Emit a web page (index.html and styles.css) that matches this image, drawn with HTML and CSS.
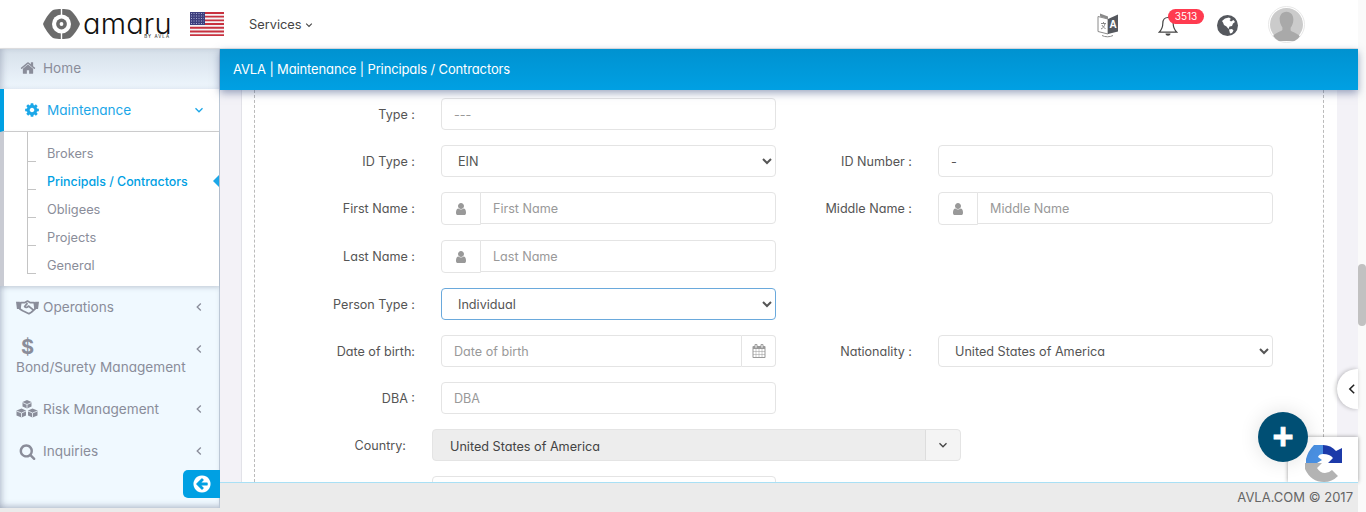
FILE: index.html
```html
<!DOCTYPE html>
<html lang="en">
<head>
    <meta charset="UTF-8">
    <meta name="viewport" content="width=device-width, initial-scale=1.0">
    <title>Principals / Contractors - Amaru</title>
    <link rel="stylesheet" href="styles.css">
</head>
<body>
    <svg class="sprite" aria-hidden="true">
        <symbol id="i-user" viewBox="0 0 1792 1792"><path d="M1536 1399q0 109-62.5 187t-150.5 78h-854q-88 0-150.5-78t-62.5-187q0-85 8.5-160.5t31.5-152 58.5-131 94-89 134.5-34.5q131 128 313 128t313-128q76 0 134.5 34.5t94 89 58.5 131 31.5 152 8.5 160.5zm-256-887q0 159-112.5 271.5t-271.5 112.5-271.5-112.5-112.5-271.5 112.5-271.5 271.5-112.5 271.5 112.5 112.5 271.5z"/></symbol>
        <symbol id="i-left" viewBox="0 0 10 10"><polyline points="6.8,1.5 3.2,5 6.8,8.5" fill="none" stroke="currentColor" stroke-width="1.3"/></symbol>
        <symbol id="i-down" viewBox="0 0 10 10"><polyline points="1.5,3.2 5,6.8 8.5,3.2" fill="none" stroke="currentColor" stroke-width="1.3"/></symbol>
    </svg>

    <div class="page">
        <div class="window">
            <header class="topbar">
                <a class="logo" href="#">
                    <svg class="logo-mark" viewBox="0 0 37 30">
                        <path fill="#6b6b6b" d="M10 1C15-.3 22-.3 27 1C31 4 35 10 37 15C35 20 31 26 27 29C22 30.300 15 30.300 10 29C6 26 2 20 0 15C2 10 6 4 10 1Z"/>
                        <circle cx="18.500" cy="15" r="9.500" fill="#fff"/>
                        <circle cx="18.500" cy="15" r="5.400" fill="#6b6b6b"/>
                        <circle cx="18.500" cy="15" r="1.900" fill="#fff"/>
                        <rect x="17.800" y="0" width="1.400" height="6" fill="#fff"/>
                        <rect x="17.800" y="24" width="1.400" height="6" fill="#fff"/>
                    </svg>
                    <span class="logo-text">amaru<small>BY AVLA</small></span>
                </a>
                <svg class="flag" viewBox="0 0 34 24">
                    <rect width="34" height="24" rx="1.5" fill="#f4f4f6"/>
                    <path fill="#c8313f" d="M0 0h34v2H0zM0 3.7h34v1.9H0zM0 7.4h34v1.9H0zM0 11.1h34v1.9H0zM0 14.8h34v1.9H0zM0 18.5h34v1.9H0zM0 22.2h34V24H0z"/>
                    <rect width="15" height="13" fill="#3d3f7e"/>
                    <path stroke="#a9abd0" stroke-width="1" stroke-dasharray="1 1.5" d="M1 1.5h13M1 4h13M1 6.5h13M1 9h13M1 11.5h13"/>
                </svg>
                <a class="services" href="#">Services <svg class="chev"><use href="#i-down"/></svg></a>

                <div class="topbar-tools">
                    <svg class="tool-lang" viewBox="0 0 22 26">
                        <path fill="#fff" stroke="#8a8a8a" d="M1 4.5 11 7V22L1 19.5Z"/>
                        <path fill="#55585e" d="M11 7 21 2.5V19.5L11 22Z"/>
                        <path fill="#8a8a8a" d="M3 1.5 11 4.5V7L3 4.5Z"/>
                        <path fill="none" stroke="#8a8a8a" d="M4 11.5h5M6.5 10v1.5M8 11.5c-.5 3-2 4.5-4 5.5M5 13c.7 1.5 2 3 3.5 3.5"/>
                        <text class="lang-letter" x="16" y="16">A</text>
                        <path fill="none" stroke="#8a8a8a" d="M5 23.5c3 1.7 8 1.7 11 0"/>
                    </svg>
                    <div class="bell">
                        <svg class="bell-icon" viewBox="0 0 20 21">
                            <path fill="#fff" stroke="#444" stroke-width="1.2" d="M10 1.5c-3.5 0-5.2 2.8-5.2 6 0 4.5-1.5 6.5-3.6 8.6h17.6c-2.1-2.1-3.6-4.1-3.6-8.6 0-3.2-1.7-6-5.2-6Z"/>
                            <path fill="#444" d="M7.5 17.5h5c0 3-5 3-5 0Z"/>
                        </svg>
                        <span class="badge">3513</span>
                    </div>
                    <svg class="globe" viewBox="0 0 21 21">
                        <circle cx="10.5" cy="10.5" r="10.5" fill="#55585e"/>
                        <path fill="#fff" d="M5 6 8 3.5 12 2.5 14 4 12.5 5 14 6.5 16.5 5 18 7 16 8.5 15 11 12.5 11.5 11.5 14 9.5 11.5 7 10 6 7.5ZM12 14.5 15 14 16.5 15.5 15 18 13 18.5Z"/>
                    </svg>
                    <div class="avatar">
                        <svg viewBox="0 0 36 36">
                            <circle cx="18" cy="18" r="18" fill="#cbcbcb"/>
                            <path fill="#a9a9a9" d="M18 4c5 0 7.5 4 7.5 8.5 0 3.5-1.5 7-3 9v3c2 2 8 3 10 6.5A18 18 0 0 1 3.500 30.500c2-3.500 8-4.500 10-6.500v-3c-1.500-2-3-5.500-3-9C10.500 8 13 4 18 4Z"/>
                        </svg>
                    </div>
                </div>
            </header>

            <div class="body-row">
                <aside class="sidebar">
                    <ul class="menu">
                        <li class="menu-item home">
                            <svg class="menu-icon" viewBox="0 0 1792 1792"><path d="M1472 992v480q0 26-19 45t-45 19h-384v-384h-256v384h-384q-26 0-45-19t-19-45v-480q0-1 .5-3t.5-3l575-474 575 474q1 2 1 6zm223-69l-62 74q-8 9-21 11h-3q-13 0-21-7l-692-577-692 577q-12 8-24 7-13-2-21-11l-62-74q-8-10-7-23.5t11-21.5l719-599q32-26 76-26t76 26l244 204v-195q0-14 9-23t23-9h192q14 0 23 9t9 23v408l219 182q10 8 11 21.5t-7 23.5z"/></svg>
                            <span>Home</span>
                        </li>
                        <li class="menu-item active">
                            <svg class="menu-icon" viewBox="0 0 1792 1792"><path d="M1152 896q0-106-75-181t-181-75-181 75-75 181 75 181 181 75 181-75 75-181zm512-109v222q0 12-8 23t-20 13l-185 28q-19 54-39 91 35 50 107 138 10 12 10 25t-9 23q-27 37-99 108t-94 71q-12 0-26-9l-138-108q-44 23-91 38-16 136-29 186-7 28-36 28h-222q-14 0-24.5-8.500t-11.500-21.500l-28-184q-49-16-90-37l-141 107q-10 9-25 9-14 0-25-11-126-114-165-168-7-10-7-23 0-12 8-23 15-21 51-66.500t54-70.500q-27-50-41-99l-183-27q-13-2-21-12.500t-8-23.500v-222q0-12 8-23t19-13l186-28q14-46 39-92-40-57-107-138-10-12-10-24 0-10 9-23 26-36 98.500-107.500t94.500-71.500q13 0 26 10l138 107q44-23 91-38 16-136 29-186 7-28 36-28h222q14 0 24.500 8.500t11.500 21.500l28 184q49 16 90 37l142-107q9-9 24-9 13 0 25 10 129 119 165 170 7 8 7 22 0 12-8 23-15 21-51 66.500t-54 70.500q26 50 41 98l183 28q13 2 21 12.500t8 23.500z"/></svg>
                            <span>Maintenance</span>
                            <svg class="chev menu-chev"><use href="#i-down"/></svg>
                        </li>
                        <li class="submenu">
                            <ul>
                                <li>Brokers</li>
                                <li class="current">Principals / Contractors</li>
                                <li>Obligees</li>
                                <li>Projects</li>
                                <li>General</li>
                            </ul>
                        </li>
                        <li class="menu-item">
                            <svg class="menu-icon wide" viewBox="0 0 24 16">
                                <path fill="none" stroke="currentColor" stroke-width="1.800" stroke-linejoin="round" d="M5 3.500 9 3.500 12 1.800 15 3.500 19 3.500 20 10 16 13.500 13.500 15 7 12 4 10ZM12 4 9 7.500C10 9 12 8.500 13 7L18 11"/>
                                <path fill="currentColor" d="M0 2.500h4L5 10H1ZM20 2.500h4L23 10h-4Z"/>
                            </svg>
                            <span>Operations</span>
                            <svg class="chev menu-chev"><use href="#i-left"/></svg>
                        </li>
                        <li class="menu-item stacked">
                            <span class="dollar">$</span>
                            <span>Bond/Surety Management</span>
                            <svg class="chev menu-chev"><use href="#i-left"/></svg>
                        </li>
                        <li class="menu-item">
                            <svg class="menu-icon wide cubes" viewBox="0 0 22 18">
                                <path d="M11 0 15.500 2V6.500L11 8.500 6.500 6.500V2ZM5.500 8.500 10 10.500V15.500L5.500 17.500 0.500 15.500V10.500ZM16.500 8.500 21.500 10.500V15.500L16.500 17.500 12 15.500V10.500Z"/>
                                <path fill="none" stroke="#f0f9ff" stroke-width=".8" d="M6.500 2.500 11 4.500 15.500 2.500M11 4.500V8.500M.5 11 5.500 13 10 11M5.500 13V17.500M12 11 16.500 13 21.500 11M16.500 13V17.500"/>
                            </svg>
                            <span>Risk Management</span>
                            <svg class="chev menu-chev"><use href="#i-left"/></svg>
                        </li>
                        <li class="menu-item">
                            <svg class="menu-icon search" viewBox="0 0 1792 1792"><path d="M1216 832q0-185-131.500-316.500t-316.500-131.500-316.500 131.500-131.500 316.500 131.500 316.500 316.500 131.500 316.500-131.500 131.500-316.500zm512 832q0 52-38 90t-90 38q-54 0-90-38l-343-342q-179 124-399 124-143 0-273.500-55.500t-225-150-150-225-55.500-273.500 55.500-273.500 150-225 225-150 273.500-55.500 273.500 55.500 225 150 150 225 55.500 273.500q0 220-124 399l343 343q37 37 37 90z"/></svg>
                            <span>Inquiries</span>
                            <svg class="chev menu-chev"><use href="#i-left"/></svg>
                        </li>
                    </ul>
                    <button class="collapse-btn" type="button">
                        <svg viewBox="0 0 1792 1792"><path d="M1408 960v-128q0-26-19-45t-45-19h-502l189-189q19-19 19-45t-19-45l-91-91q-18-18-45-18t-45 18l-362 362-91 91q-18 18-18 45t18 45l91 91 362 362q18 18 45 18t45-18l91-91q18-18 18-45t-18-45l-189-189h502q26 0 45-19t19-45zm256-64q0 209-103 385.500t-279.500 279.500-385.500 103-385.500-103-279.500-279.500-103-385.500 103-385.500 279.500-279.500 385.500-103 385.500 103 279.500 279.500 103 385.500z"/></svg>
                    </button>
                </aside>

                <main class="main">
                    <div class="breadcrumb">AVLA | Maintenance | Principals / Contractors</div>
                    <div class="content">
                        <div class="card">
                            <div class="dashed">
                                <form class="form-grid">
                                    <label>Type :</label>
                                    <input class="field" type="text" placeholder="---">
                                    <span></span><span></span>

                                    <label>ID Type :</label>
                                    <select class="field"><option>EIN</option></select>
                                    <label>ID Number :</label>
                                    <input class="field" type="text" value="-">

                                    <label>First Name :</label>
                                    <div class="group">
                                        <span class="addon"><svg><use href="#i-user"/></svg></span>
                                        <input class="field" type="text" placeholder="First Name">
                                    </div>
                                    <label>Middle Name :</label>
                                    <div class="group">
                                        <span class="addon"><svg><use href="#i-user"/></svg></span>
                                        <input class="field" type="text" placeholder="Middle Name">
                                    </div>

                                    <label>Last Name :</label>
                                    <div class="group">
                                        <span class="addon"><svg><use href="#i-user"/></svg></span>
                                        <input class="field" type="text" placeholder="Last Name">
                                    </div>
                                    <span></span><span></span>

                                    <label>Person Type :</label>
                                    <select class="field focused"><option>Individual</option></select>
                                    <span></span><span></span>

                                    <label>Date of birth:</label>
                                    <div class="group date">
                                        <input class="field" type="text" placeholder="Date of birth">
                                        <span class="addon">
                                            <svg viewBox="0 0 1792 1792"><path d="M192 1664h288v-288h-288v288zm352 0h320v-288h-320v288zm-352-352h288v-320h-288v320zm352 0h320v-320h-320v320zm-352-384h288v-288h-288v288zm736 736h320v-288h-320v288zm-384-736h320v-288h-320v288zm768 736h288v-288h-288v288zm-384-352h320v-320h-320v320zm-352-864v-288q0-13-9.500-22.500t-22.500-9.500h-64q-13 0-22.500 9.500t-9.500 22.500v288q0 13 9.500 22.500t22.500 9.500h64q13 0 22.500-9.500t9.500-22.500zm736 864h288v-320h-288v320zm-384-384h320v-288h-320v288zm384 0h288v-288h-288v288zm32-480v-288q0-13-9.500-22.500t-22.500-9.500h-64q-13 0-22.500 9.500t-9.500 22.500v288q0 13 9.500 22.500t22.500 9.500h64q13 0 22.500-9.500t9.500-22.500zm384-64v1280q0 52-38 90t-90 38h-1408q-52 0-90-38t-38-90v-1280q0-52 38-90t90-38h128v-96q0-66 47-113t113-47h64q66 0 113 47t47 113v96h384v-96q0-66 47-113t113-47h64q66 0 113 47t47 113v96h128q52 0 90 38t38 90z"/></svg>
                                        </span>
                                    </div>
                                    <label>Nationality :</label>
                                    <select class="field"><option>United States of America</option></select>

                                    <label>DBA :</label>
                                    <input class="field" type="text" placeholder="DBA">
                                    <span></span><span></span>
                                </form>

                                <div class="form-grid address">
                                    <label>Country:</label>
                                    <div class="combo">
                                        <span class="combo-value">United States of America</span>
                                        <span class="combo-arrow"><svg class="chev"><use href="#i-down"/></svg></span>
                                    </div>
                                    <span></span>
                                    <input class="field" type="text">
                                </div>
                            </div>
                        </div>

                        <button class="side-toggle" type="button"><svg><use href="#i-left"/></svg></button>
                        <button class="fab" type="button">+</button>
                        <div class="recaptcha">
                            <svg viewBox="0 0 38 38">
                                <path fill="#b3b3b3" d="M0 18H17L12 23Q15 28 20 28 24 28 27 25L33 31Q27 37 19 37 6 37 0 24Z"/>
                                <path fill="#4a90e2" d="M1 18V14Q3 6 9 0H18V9Q14 9 13 12L17 15 12 18Z"/>
                                <path fill="#1c3aa9" d="M18 0Q26 0 31 6L37 3V18H23L28 13Q25 9 18 9Z"/>
                            </svg>
                        </div>
                    </div>
                    <footer class="footer">AVLA.COM © 2017</footer>
                </main>
            </div>
        </div>
        <div class="scrollbar"><div class="thumb"></div></div>
    </div>
</body>
</html>
```

FILE: styles.css
```css
* {
    box-sizing: border-box;
}
html, body {
    height: 100%;
}
body {
    margin: 0;
    font-family: Inter, Lato, sans-serif;
    font-feature-settings: "cv11";
    font-size: 13px;
    color: #555;
    background-color: #ebebeb;
    overflow: hidden;
}
.sprite {
    display: none;
}
.chev {
    width: 10px;
    height: 10px;
}
.page {
    display: flex;
    height: 100%;
}
.window {
    flex: 1;
    display: flex;
    flex-direction: column;
    min-width: 0;
}
.scrollbar {
    width: 8px;
    background: #fafafa;
}
.thumb {
    width: 8px;
    height: 62px;
    margin-top: 264px;
    border-radius: 4px;
    background: #c1c1c1;
}

/* top bar */
.topbar {
    height: 49px;
    display: flex;
    align-items: center;
    background: #fff;
    border-bottom: 1px solid #e4e4e4;
    flex-shrink: 0;
}
.logo {
    display: flex;
    align-items: flex-start;
    gap: 3px;
    margin-left: 43px;
    color: #111;
    text-decoration: none;
}
.logo-mark {
    width: 37px;
    height: 30px;
}
.logo-text {
    position: relative;
    width: 87px;
    margin-top: 4px;
    font-weight: 300;
    font-size: 29px;
    line-height: 22px;
    letter-spacing: .2px;
}
.logo-text small {
    position: absolute;
    right: 0;
    top: 22px;
    font-size: 4.500px;
    line-height: 4px;
    letter-spacing: 1px;
    font-weight: 400;
    white-space: nowrap;
}
.flag {
    width: 34px;
    height: 24px;
    margin-left: 20px;
}
.services {
    margin-left: 25px;
    margin-top: 1px;
    color: #444;
    font-size: 12.800px;
    text-decoration: none;
    display: flex;
    align-items: center;
    gap: 3px;
}
.services .chev {
    width: 8px;
}
.topbar-tools {
    margin-left: auto;
    display: flex;
    align-items: center;
    padding-right: 53px;
}
.tool-lang {
    width: 22px;
    height: 26px;
    margin-top: 2px;
}
.lang-letter {
    font: 700 10px "Liberation Sans", sans-serif;
    fill: #fff;
    text-anchor: middle;
}
.bell {
    position: relative;
    width: 20px;
    height: 21px;
    margin-left: 39px;
    margin-top: 4px;
}
.bell-icon {
    width: 20px;
    height: 21px;
    display: block;
}
.badge {
    position: absolute;
    left: 10px;
    top: -7px;
    width: 36px;
    height: 15px;
    border-radius: 8px;
    background: #ff3b50;
    color: #fff;
    font-size: 10px;
    line-height: 15px;
    text-align: center;
}
.globe {
    width: 21px;
    height: 21px;
    margin-left: 39px;
    margin-top: 2px;
}
.avatar {
    width: 37px;
    height: 37px;
    margin-left: 30px;
    padding: 1px;
    border-radius: 50%;
    border: 1px solid #e8e8e8;
}
.avatar svg {
    display: block;
    width: 100%;
    height: 100%;
}

/* sidebar */
.body-row {
    flex: 1;
    display: flex;
    min-height: 0;
}
.sidebar {
    position: relative;
    width: 220px;
    height: 459px;
    flex-shrink: 0;
    background: #f0f9ff;
    box-shadow: inset 4px 0 6px -2px rgba(80, 90, 120, .3), inset 0 -5px 6px -3px rgba(80, 90, 120, .3);
    border-right: 1px solid #bcc8d6;
    color: #8a8d9a;
    font-size: 13.600px;
}
.menu, .submenu ul {
    list-style: none;
    margin: 0;
    padding: 0;
}
.menu-item {
    position: relative;
    height: 42px;
    display: flex;
    align-items: center;
    padding: 0 0 0 20px;
}
.menu-item.home {
    height: 40px;
    padding-bottom: 3px;
    background: linear-gradient(#d6e0ea, #eef6fd);
    box-shadow: inset 4px 0 6px -2px rgba(80, 90, 120, .3), 0 1px 3px rgba(80, 90, 120, .3);
}
.menu-icon {
    width: 16px;
    height: 16px;
    margin-right: 7px;
    fill: currentColor;
    flex-shrink: 0;
}
.menu-icon.wide {
    width: 23px;
    height: 16px;
    margin-left: -4px;
    margin-right: 4px;
}
.menu-icon.cubes {
    width: 22px;
    height: 18px;
    margin-right: 5px;
}
.menu-icon.search {
    width: 17px;
    height: 17px;
    margin-left: -1px;
}
.menu-chev {
    position: absolute;
    right: 15px;
    top: 16px;
}
.menu-item.active {
    background: #fff;
    color: #1ba7e8;
    border-left: 4px solid #00a0e3;
    padding-left: 20px;
    border-bottom: 1px solid #cfcfcf;
    height: 43px;
}
.menu-item.stacked {
    height: 60px;
    display: block;
    padding: 10px 0 0 16px;
    line-height: 20px;
}
.stacked .dollar {
    display: block;
    margin-left: 5px;
    font-size: 20px;
    font-weight: 700;
    line-height: 19px;
}
.submenu {
    background: #fff;
    border-left: 4px solid #c9cbd3;
    padding: 7px 0;
    box-shadow: 0 2px 4px rgba(80, 90, 120, .25);
    position: relative;
    font-size: 12.800px;
}
.submenu li {
    position: relative;
    height: 28px;
    line-height: 30px;
    padding-left: 43px;
}
.submenu li::before {
    content: "";
    position: absolute;
    left: 23px;
    top: -7px;
    width: 8px;
    height: 29px;
    border-left: 1px solid #c4c4c4;
    border-bottom: 1px solid #c4c4c4;
}
.submenu li.current {
    color: #00a0e3;
    font-size: 12.400px;
    font-weight: 500;
}
.submenu li.current::after {
    content: "";
    position: absolute;
    right: 0;
    top: 8px;
    border: 6px solid transparent;
    border-right: 6px solid #1ba7e8;
    border-left: 0;
}
.collapse-btn {
    position: absolute;
    right: -1px;
    top: 421px;
    width: 37px;
    height: 28px;
    border: 0;
    border-radius: 5px 0 0 5px;
    background: #00a0e3;
    padding: 0;
}
.collapse-btn svg {
    display: block;
    width: 20px;
    height: 20px;
    margin: 0 auto;
    fill: #fff;
}

/* main */
.main {
    flex: 1;
    min-width: 0;
    display: flex;
    flex-direction: column;
}
.breadcrumb {
    position: relative;
    z-index: 2;
    height: 41px;
    line-height: 40px;
    padding-left: 13px;
    color: #fff;
    letter-spacing: -.13px;
    background: linear-gradient(#0092d0, #00a0e3);
    box-shadow: 0 3px 8px rgba(60, 80, 130, .5);
    flex-shrink: 0;
}
.content {
    position: relative;
    flex: 1;
    min-height: 0;
    padding: 0 21px 0 21px;
    background: #f3f2f7;
}
.card {
    height: 100%;
    overflow: hidden;
    background: #fff;
    border-left: 1px solid #e2e2e8;
    padding: 0 13px 0 12px;
}
.dashed {
    height: 100%;
    border-left: 1px dashed #bbb;
    border-right: 1px dashed #bbb;
    padding-top: 8px;
}
.form-grid {
    display: grid;
    grid-template-columns: 160px 335px 110px 335px;
    column-gap: 26px;
    row-gap: 15px;
    align-items: start;
}
.form-grid label {
    height: 32px;
    line-height: 34px;
    font-size: 12.600px;
    text-align: right;
    white-space: nowrap;
    color: #555;
}
.field {
    display: block;
    width: 100%;
    height: 32px;
    padding: 1px 12px 0;
    border: 1px solid #e4e4e4;
    border-radius: 4px;
    background: #fff;
    font: inherit;
    font-size: 12.650px;
    color: #555;
    outline: none;
}
select.field {
    padding-left: 12px;
}
.field::placeholder {
    color: #999;
    opacity: 1;
    font-size: 12.600px;
}
.field.focused {
    border-color: #6aa9dc;
}
.group {
    display: flex;
    height: 33px;
}
.group .field {
    flex: 1;
    min-width: 0;
    border-radius: 0 4px 4px 0;
    margin-left: -1px;
}
.group .addon {
    width: 40px;
    flex-shrink: 0;
    display: flex;
    align-items: center;
    justify-content: center;
    border: 1px solid #e4e4e4;
    border-radius: 4px 0 0 4px;
    background: #fff;
}
.addon svg {
    width: 14px;
    height: 14px;
    fill: #999;
}
.group.date {
    height: 32px;
}
.group.date .field {
    margin-left: 0;
    border-radius: 4px 0 0 4px;
}
.group.date .addon {
    width: 34px;
    border-left: 0;
    border-radius: 0 4px 4px 0;
}
.group.date .addon svg {
    width: 14px;
    height: 14px;
}
.address {
    grid-template-columns: 151px 529px;
    margin-top: 15px;
}
.address .field {
    width: 344px;
}
.combo {
    display: flex;
    height: 32px;
    border: 1px solid #e4e4e4;
    border-radius: 4px;
    background: #ededed;
    color: #444;
    font-size: 12.650px;
    line-height: 33px;
}
.combo-value {
    flex: 1;
    padding-left: 17px;
}
.combo-arrow {
    width: 35px;
    display: flex;
    align-items: center;
    justify-content: center;
    border-left: 1px solid #ddd;
    background: #f4f4f4;
    border-radius: 0 4px 4px 0;
}

/* floating bits */
.side-toggle {
    position: absolute;
    right: 0;
    top: 279px;
    width: 21px;
    height: 40px;
    border: 0;
    padding: 0 0 0 9px;
    background: #fff;
    border-radius: 20px 0 0 20px;
    box-shadow: -1px 0 4px rgba(0, 0, 0, .25);
    color: #222;
}
.side-toggle svg {
    display: block;
    width: 12px;
    height: 14px;
}
.fab {
    position: absolute;
    right: 50px;
    top: 322px;
    width: 50px;
    height: 50px;
    z-index: 3;
    border: 0;
    border-radius: 50%;
    background: #004f74;
    color: #fff;
    font: 700 36px/46px "Liberation Sans", sans-serif;
    -webkit-text-stroke: .8px #fff;
    padding: 0;
    box-shadow: 0 0 20px rgba(0, 0, 0, .12);
}
.recaptcha {
    position: absolute;
    right: 0;
    bottom: 0;
    width: 70px;
    height: 45px;
    z-index: 2;
    overflow: hidden;
    background: #fff;
    box-shadow: 0 0 4px rgba(0, 0, 0, .4);
}
.recaptcha svg {
    display: block;
    width: 38px;
    height: 38px;
    margin: 8px 0 0 17px;
}
.footer {
    position: relative;
    z-index: 3;
    height: 30px;
    flex-shrink: 0;
    line-height: 29px;
    font-size: 13px;
    text-align: right;
    padding-right: 5px;
    color: #666;
    background: #ebebeb;
    border-top: 1px solid #a9e0f5;
}
```
